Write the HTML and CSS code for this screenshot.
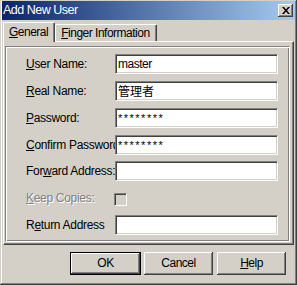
FILE: index.html
```html
<!DOCTYPE html>
<html>
<head>
<meta charset="utf-8">
<link rel="stylesheet" href="styles.css">
</head>
<body>
<div class="window">
  <div class="titlebar">
    <span class="title">Add New User</span>
    <span class="close"><svg width="8" height="7" viewBox="0 0 8 7"><path d="M0 0h2l2 2.5L6 0h2L5 3.5 8 7H6L4 4.5 2 7H0l3-3.5z" fill="#000"/></svg></span>
  </div>
  <div class="tabs">
    <div class="tab active"><u>G</u>eneral</div>
    <div class="tab"><u>F</u>inger Information</div>
  </div>
  <div class="panel">
    <div class="frame">
      <div class="row"><span class="label"><u>U</u>ser Name:</span><span class="input">master</span></div>
      <div class="row"><span class="label"><u>R</u>eal Name:</span><span class="input cjk">管理者</span></div>
      <div class="row"><span class="label"><u>P</u>assword:</span><span class="input pw">********</span></div>
      <div class="row"><span class="label"><u>C</u>onfirm Password</span><span class="input pw">********</span></div>
      <div class="row"><span class="label">For<u>w</u>ard Address:</span><span class="input"></span></div>
      <div class="row"><span class="label disabled"><u>K</u>eep Copies:</span><span class="check"></span></div>
      <div class="row"><span class="label">R<u>e</u>turn Address</span><span class="input"></span></div>
    </div>
  </div>
  <div class="buttons">
    <div class="btn default"><span class="inner">OK</span></div>
    <div class="btn cancel"><span class="inner">Cancel</span></div>
    <div class="btn"><span class="inner"><u>H</u>elp</span></div>
  </div>
</div>
</body>
</html>
```
FILE: styles.css
```css
* { box-sizing: border-box; }
html, body { margin: 0; padding: 0; background: #d4d0c8; }
body {
  font-family: "Liberation Sans", Arial, sans-serif;
  font-size: 12px;
  letter-spacing: -0.5px;
  color: #000;
}
u { text-decoration: underline; text-underline-offset: 1px; }
.window {
  width: 297px;
  height: 285px;
  background: #d4d0c8;
  padding: 1px 2px 2px 2px;
  box-shadow: inset -1px -1px #404040, inset 1px 1px #d4d0c8, inset -2px -2px #808080, inset 2px 2px #fff;
  display: flex;
  flex-direction: column;
}
.titlebar {
  height: 19px;
  background: linear-gradient(to right, #0a246a, #a6caf0);
  display: flex;
  align-items: center;
  padding-left: 1px;
}
.title {
  color: #fff;
  font-size: 12.5px;
  flex: 1;
  line-height: 19px;
}
.close {
  width: 15px;
  height: 13px;
  margin-right: 2px;
  background: #d4d0c8;
  box-shadow: inset -1px -1px #404040, inset 1px 1px #fff, inset -2px -2px #808080;
  display: flex;
  align-items: center;
  justify-content: center;
}
.tabs {
  height: 21px;
  display: flex;
  align-items: flex-end;
  padding-left: 1px;
  position: relative;
  z-index: 1;
}
.tab {
  height: 17px;
  padding: 0 6px 0 5px;
  line-height: 16px;
  border-top: 1px solid #fff;
  border-left: 1px solid #fff;
  border-right: 1px solid #404040;
  box-shadow: inset -1px 0 #808080;
  border-radius: 2px 2px 0 0;
}
.tab.active {
  height: 20px;
  margin-bottom: -1px;
  padding: 1px 6px 0 5px;
  background: #d4d0c8;
}
.panel {
  margin: 0 1px;
  height: 204px;
  border-top: 1px solid #fff;
  border-left: 1px solid #fff;
  border-right: 1px solid #404040;
  border-bottom: 1px solid #404040;
  box-shadow: inset -1px -1px #808080;
  padding: 4px 3px 2px 1px;
}
.frame {
  height: 100%;
  border-top: 1px solid #808080;
  border-left: 1px solid #808080;
  border-right: 1px solid #fff;
  border-bottom: 1px solid #fff;
  box-shadow: inset 1px 1px #fff, inset -1px -1px #808080;
  padding: 7px 0 0 20px;
  display: flex;
  flex-direction: column;
  gap: 7px;
}
.row {
  height: 20px;
  display: flex;
  align-items: center;
}
.row:nth-child(5) { margin-top: -1px; }
.label {
  width: 89px;
  flex: none;
  white-space: nowrap;
  letter-spacing: -0.3px;
}
.label.disabled {
  color: #808080;
  text-shadow: 1px 1px #fff;
}
.input {
  width: 163px;
  height: 20px;
  flex: none;
  background: #fff;
  border-top: 1px solid #808080;
  border-left: 1px solid #808080;
  border-right: 1px solid #fff;
  border-bottom: 1px solid #fff;
  box-shadow: inset 1px 1px #404040, inset -1px -1px #d4d0c8;
  padding: 0 2px;
  line-height: 18px;
  white-space: nowrap;
  overflow: hidden;
}
.input.cjk {
  font-family: "Noto Sans CJK JP", "Liberation Sans", sans-serif;
  font-size: 12px;
  letter-spacing: 0;
}
.input.pw {
  letter-spacing: 1.5px;
  font-size: 11px;
}
.check {
  width: 13px;
  height: 13px;
  margin-left: -1px;
  margin-top: 2px;
  background: #d4d0c8;
  border-top: 1px solid #808080;
  border-left: 1px solid #808080;
  border-right: 1px solid #fff;
  border-bottom: 1px solid #fff;
  box-shadow: inset 1px 1px #404040, inset -1px -1px #d4d0c8;
}
.buttons {
  display: flex;
  justify-content: flex-end;
  padding-top: 7px;
  padding-right: 9px;
}
.btn {
  width: 69px;
  height: 23px;
  margin-left: 4px;
  display: flex;
}
.btn.default {
  width: 71px;
  margin-left: 0;
  border: 1px solid #000;
}
.btn.cancel { margin-left: 3px; }
.inner {
  flex: 1;
  display: flex;
  align-items: center;
  justify-content: center;
  background: #d4d0c8;
  box-shadow: inset -1px -1px #404040, inset 1px 1px #fff, inset -2px -2px #808080;
  padding-bottom: 1px;
}
```
